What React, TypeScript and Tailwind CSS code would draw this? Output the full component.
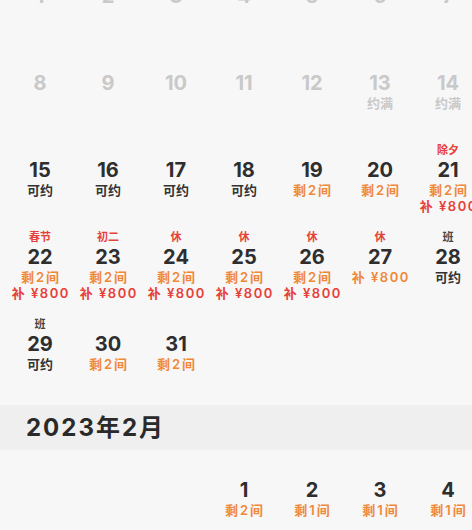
import React from 'react';

type Day = {
    n?: number;
    label?: string;
    labelColor?: 'red' | 'dark';
    off?: boolean;
    lines?: { text: string; color: 'orange' | 'red' | 'dark' | 'gray' }[];
};

const lineColors = {
    orange: 'text-[#f0883a]',
    red: 'text-[#e6413a]',
    dark: 'text-[#333333]',
    gray: 'text-[#c9c9c9]'
};

const left = (text: string) => ({ text, color: 'orange' as const });
const buy = (color: 'orange' | 'red' = 'red') => ({ text: '补 ¥800', color });
const ok = { text: '可约', color: 'dark' as const };

const january: Day[][] = [
    [1, 2, 3, 4, 5, 6, 7].map(n => ({ n, off: true })),
    [
        ...[8, 9, 10, 11, 12].map(n => ({ n, off: true })),
        { n: 13, off: true, lines: [{ text: '约满', color: 'gray' }] },
        { n: 14, off: true, lines: [{ text: '约满', color: 'gray' }] }
    ],
    [
        { n: 15, lines: [ok] },
        { n: 16, lines: [ok] },
        { n: 17, lines: [ok] },
        { n: 18, lines: [ok] },
        { n: 19, lines: [left('剩2间')] },
        { n: 20, lines: [left('剩2间')] },
        { n: 21, label: '除夕', labelColor: 'red', lines: [left('剩2间'), buy()] }
    ],
    [
        { n: 22, label: '春节', labelColor: 'red', lines: [left('剩2间'), buy()] },
        { n: 23, label: '初二', labelColor: 'red', lines: [left('剩2间'), buy()] },
        { n: 24, label: '休', labelColor: 'red', lines: [left('剩2间'), buy()] },
        { n: 25, label: '休', labelColor: 'red', lines: [left('剩2间'), buy()] },
        { n: 26, label: '休', labelColor: 'red', lines: [left('剩2间'), buy()] },
        { n: 27, label: '休', labelColor: 'red', lines: [buy('orange')] },
        { n: 28, label: '班', labelColor: 'dark', lines: [ok] }
    ],
    [
        { n: 29, label: '班', labelColor: 'dark', lines: [ok] },
        { n: 30, lines: [left('剩2间')] },
        { n: 31, lines: [left('剩2间')] },
        {}, {}, {}, {}
    ]
];

const february: Day[][] = [
    [
        {}, {}, {},
        { n: 1, lines: [left('剩2间')] },
        { n: 2, lines: [left('剩1间')] },
        { n: 3, lines: [left('剩1间')] },
        { n: 4, lines: [left('剩1间')] }
    ]
];

const font = { fontFamily: '"Inter", "Noto Sans CJK SC", sans-serif' };

const DayCell: React.FC<{ day: Day }> = ({ day }) => {
    if (day.n === undefined) return <div className="h-[87px]" />;
    return (
        <div className="h-[87px] flex flex-col items-center">
            <div className={`h-[16px] leading-[16px] text-[11px] font-semibold ${day.labelColor === 'dark' ? 'text-[#444444]' : 'text-[#e6413a]'}`}>
                {day.label}
            </div>
            <div className={`h-[24px] leading-[24px] text-[20px] font-bold ${day.off ? 'text-[#c9c9c9]' : 'text-[#2e2e2e]'}`}>
                {day.n}
            </div>
            {day.lines?.map((l, i) => (
                <div
                    key={i}
                    className={`h-[16px] leading-[16px] text-[13px] font-semibold whitespace-nowrap ${l.text.startsWith('剩') ? 'tracking-[2px] pl-[2px]' : l.text.startsWith('补') ? 'tracking-[1.5px] pl-[1.5px]' : ''} ${lineColors[l.color]} ${l.color === 'gray' ? 'font-normal' : ''}`}
                >
                    {l.text}
                </div>
            ))}
        </div>
    );
};

const MonthGrid: React.FC<{ weeks: Day[][] }> = ({ weeks }) => (
    <div className="pl-[6px]">
        {weeks.map((week, i) => (
            <div key={i} className="grid grid-cols-[repeat(7,68px)]">
                {week.map((d, j) => (
                    <DayCell key={j} day={d} />
                ))}
            </div>
        ))}
    </div>
);

export default function App() {
    return (
        <div className="w-[472px] h-[530px] overflow-hidden bg-[#f7f7f7]" style={font}>
            <div className="mt-[-32px]">
                <MonthGrid weeks={january} />
            </div>
            <div className="mt-[2px] h-[45px] bg-[#efefef] flex items-center pl-[26px]">
                <span className="text-[24px] font-bold text-[#2a2a2a] tracking-[2px]">2023年2月</span>
            </div>
            <div className="pt-[12px]">
                <MonthGrid weeks={february} />
            </div>
        </div>
    );
}
